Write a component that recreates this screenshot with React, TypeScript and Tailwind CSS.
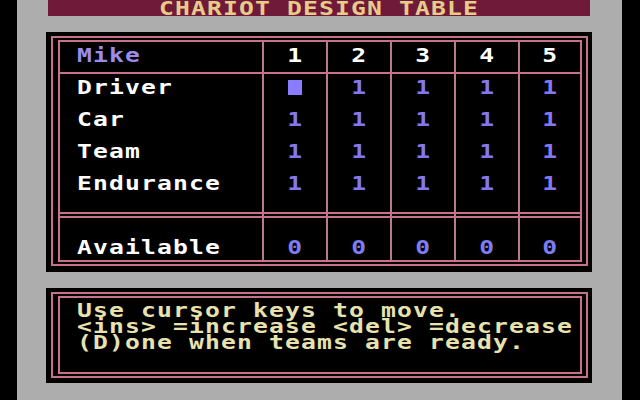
import * as React from 'react';

// CGA-style "Chariot Design Table" screen: 40-column text, double pink frames.

const cols = [0, 1, 2, 3, 4];

function Glyphs({ children, className = '' }: { children: React.ReactNode; className?: string }) {
  return (
    <span className={`inline-block origin-left scale-x-[1.3] whitespace-pre ${className}`}>{children}</span>
  );
}

function Digit({ children, className = '' }: { children: React.ReactNode; className?: string }) {
  return <span className={`inline-block scale-x-[1.3] ${className}`}>{children}</span>;
}

function Cell({ index, pad, children }: { index: number; pad: string; children?: React.ReactNode }) {
  return (
    <div
      className={`${index === 4 ? 'w-[62px]' : 'w-[64px]'} ${pad} border-l-2 border-[#b87a8e] flex justify-center items-start`}
    >
      {children}
    </div>
  );
}

interface RowProps {
  label?: string;
  labelClass?: string;
  values?: React.ReactNode[];
  pad?: string;
  className: string;
}

function Row({ label, labelClass = 'text-white', values, pad = '', className }: RowProps) {
  return (
    <div className={`flex ${className}`}>
      <div className={`w-[202px] pl-[17px] ${pad}`}>
        {label && <Glyphs className={labelClass}>{label}</Glyphs>}
      </div>
      {cols.map((i) => (
        <Cell key={i} index={i} pad={pad}>
          {values ? values[i] : null}
        </Cell>
      ))}
    </div>
  );
}

const one = <Digit className="text-[#8478f2]">1</Digit>;
const zero = <Digit className="text-[#7e7cf2]">0</Digit>;

export default function App() {
  const header = cols.map((i) => (
    <Digit key={i} className="text-white">
      {i + 1}
    </Digit>
  ));
  const driver = [
    <div key="cursor" className="w-[14px] h-[15px] mt-[1px] bg-[#8a7cff]" />,
    one,
    one,
    one,
    one,
  ];
  const ones = [one, one, one, one, one];
  const zeros = [zero, zero, zero, zero, zero];

  return (
    <div className="w-[640px] h-[400px] bg-black flex overflow-hidden font-['DejaVu_Sans_Mono',monospace] font-bold text-[19px] leading-4 tracking-[0.87px]">
      <div className="ml-[17px] w-[605px] h-full bg-[#adadad] pl-[29px] pr-[30px] flex flex-col">
        {/* title bar */}
        <div className="mx-[2px] h-4 bg-[#701a3a] flex justify-center">
          <span className="inline-block scale-x-[1.3] whitespace-pre text-[#e6cc88]">CHARIOT DESIGN TABLE</span>
        </div>

        {/* design table */}
        <div className="mt-4 h-[240px] bg-black pt-[4px] pl-[5px] pr-[4px] pb-[6px]">
          <div className="h-full border-2 border-[#c8708c] pt-[2px] pb-[2px] pl-[5px] pr-[4px]">
            <div className="h-full border-2 border-[#c8708c] flex flex-col">
              <Row
                label="Mike"
                labelClass="text-[#9c8cea]"
                values={header}
                pad="pt-[5px]"
                className="h-8 border-b-2 border-[#c8708c]"
              />
              <Row label="Driver" values={driver} pad="pt-[5px]" className="h-8" />
              <Row label="Car" values={ones} pad="pt-[5px]" className="h-8" />
              <Row label="Team" values={ones} pad="pt-[5px]" className="h-8" />
              <Row label="Endurance" values={ones} pad="pt-[5px]" className="h-8" />
              <Row className="h-[12px] border-b-2 border-[#c8708c]" />
              <Row className="h-[2px]" />
              <Row
                label="Available"
                values={zeros}
                pad="pt-[21px]"
                className="h-[44px] border-t-2 border-[#c8708c]"
              />
            </div>
          </div>
        </div>

        {/* help box */}
        <div className="mt-4 h-[95px] bg-black pt-[4px] pl-[5px] pr-[4px] pb-[5px]">
          <div className="h-full border-2 border-[#c8708c] pt-[2px] pb-[2px] pl-[5px] pr-[4px]">
            <div className="h-full border-2 border-[#c8708c] pt-[4px] pl-[17px] flex flex-col text-[#e8e2b0]">
              <Glyphs>Use cursor keys to move.</Glyphs>
              <Glyphs>{'<ins> =increase <del> =decrease'}</Glyphs>
              <Glyphs>(D)one when teams are ready.</Glyphs>
            </div>
          </div>
        </div>
      </div>
    </div>
  );
}
